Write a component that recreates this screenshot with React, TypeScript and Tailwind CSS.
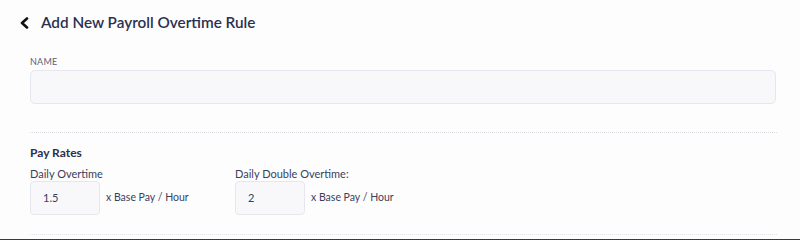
import React from "react";

const RateField = ({ label, value }: { label: string; value: string }) => {
  return (
    <div className="flex w-[205px] flex-col">
      <label className="text-[11px] leading-[14px] text-[#3a3f5c]">{label}</label>
      <div className="flex items-center">
        <div className="flex h-[34px] w-[70px] items-center rounded-[4px] border border-[#e6e6ee] bg-[#f8f8fb] px-3 text-[11px] text-[#3a3f5c]">
          {value}
        </div>
        <span className="ml-[6px] text-[10.5px] text-[#3a3f5c]">x Base Pay / Hour</span>
      </div>
    </div>
  );
};

export default function App() {
  return (
    <div
      className="flex h-[240px] w-[800px] flex-col bg-[#fdfdfd]"
      style={{ fontFamily: "Lato, 'Noto Sans', sans-serif" }}
    >
      {/* Header */}
      <div className="flex h-[45px] items-center pl-[19px]">
        <svg width="11" height="12" viewBox="0 0 11 12" className="mr-[11px]">
          <path d="M8 1.5 L3 6 L8 10.5" fill="none" stroke="#111" strokeWidth="2.6" strokeLinecap="round" strokeLinejoin="round" />
        </svg>
        <h1 className="text-[15.3px] font-semibold text-[#2b3050]">Add New Payroll Overtime Rule</h1>
      </div>

      {/* Name */}
      <div className="flex flex-col px-[30px] pt-[11px]">
        <label className="text-[9px] uppercase leading-[12px] tracking-wide text-[#5b5f75]">Name</label>
        <div className="mt-[2px] h-[34px] w-[746px] rounded-[5px] border border-[#e6e6ee] bg-[#f8f8fb]" />
      </div>

      <div className="ml-[30px] mt-[28px] w-[747px] border-t border-dotted border-[#dcdce2]" />

      {/* Pay rates */}
      <div className="flex flex-col px-[30px] pt-[12px]">
        <h2 className="text-[12px] font-bold leading-[16px] text-[#2b3050]">Pay Rates</h2>
        <div className="mt-[6px] flex">
          <RateField label="Daily Overtime" value="1.5" />
          <RateField label="Daily Double Overtime:" value="2" />
        </div>
      </div>

      <div className="ml-[30px] mt-auto mb-[4px] w-[747px] border-t border-dotted border-[#e2e2e8]" />
      <div className="h-[1px] w-full bg-[#3b3b3b]" />
    </div>
  );
}
